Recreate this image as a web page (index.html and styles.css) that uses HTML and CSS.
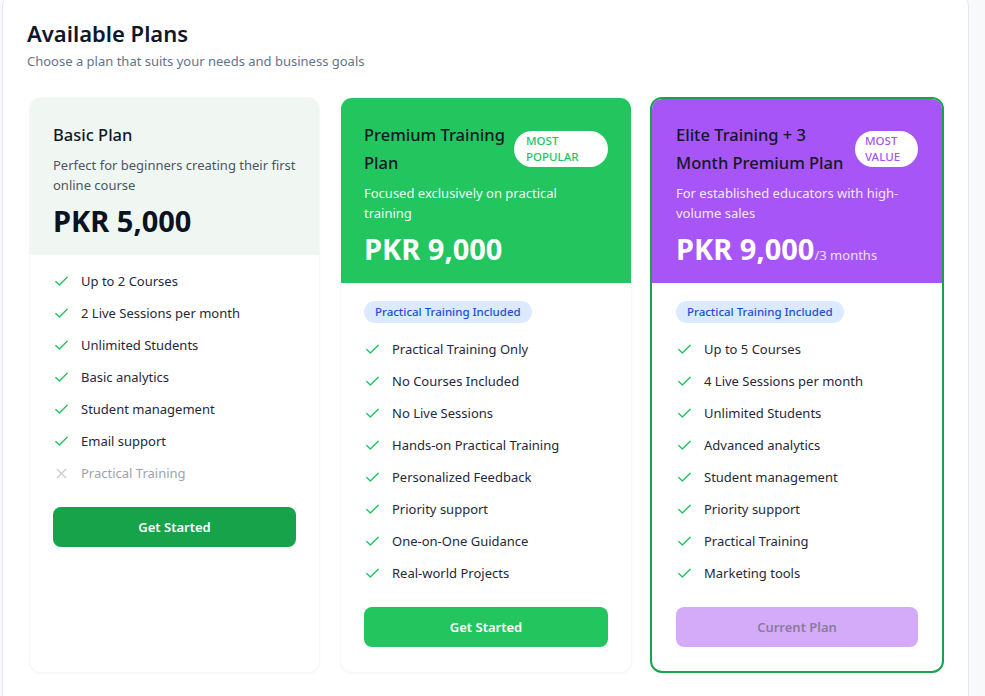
FILE: index.html
```html
<!DOCTYPE html>
<html lang="en">
<head>
<meta charset="utf-8">
<title>Available Plans</title>
<link rel="stylesheet" href="styles.css">
</head>
<body>
<section class="panel">
  <header class="panel-head">
    <h1 class="panel-title">Available Plans</h1>
    <p class="panel-sub">Choose a plan that suits your needs and business goals</p>
  </header>
  <div class="plans">
    <article class="card">
      <div class="card-head head-basic">
        <div class="title-row">
          <h2 class="plan-name">Basic Plan</h2>
        </div>
        <p class="plan-desc">Perfect for beginners creating their first online course</p>
        <div class="price">PKR 5,000</div>
      </div>
      <div class="card-body">
        <ul class="features">
          <li class="feat"><svg class="ico ok" viewBox="0 0 24 24"><path d="M20 6 9 17l-5-5"/></svg>Up to 2 Courses</li>
          <li class="feat"><svg class="ico ok" viewBox="0 0 24 24"><path d="M20 6 9 17l-5-5"/></svg>2 Live Sessions per month</li>
          <li class="feat"><svg class="ico ok" viewBox="0 0 24 24"><path d="M20 6 9 17l-5-5"/></svg>Unlimited Students</li>
          <li class="feat"><svg class="ico ok" viewBox="0 0 24 24"><path d="M20 6 9 17l-5-5"/></svg>Basic analytics</li>
          <li class="feat"><svg class="ico ok" viewBox="0 0 24 24"><path d="M20 6 9 17l-5-5"/></svg>Student management</li>
          <li class="feat"><svg class="ico ok" viewBox="0 0 24 24"><path d="M20 6 9 17l-5-5"/></svg>Email support</li>
          <li class="feat off"><svg class="ico no" viewBox="0 0 24 24"><path d="M18 6 6 18M6 6l12 12"/></svg>Practical Training</li>
        </ul>
        <button class="btn btn-dark">Get Started</button>
      </div>
    </article>

    <article class="card">
      <div class="card-head head-green">
        <div class="title-row">
          <h2 class="plan-name">Premium Training Plan</h2>
          <span class="tag tag-green">MOST POPULAR</span>
        </div>
        <p class="plan-desc desc-green">Focused exclusively on practical training</p>
        <div class="price price-light">PKR 9,000</div>
      </div>
      <div class="card-body">
        <span class="pill">Practical Training Included</span>
        <ul class="features">
          <li class="feat"><svg class="ico ok" viewBox="0 0 24 24"><path d="M20 6 9 17l-5-5"/></svg>Practical Training Only</li>
          <li class="feat"><svg class="ico ok" viewBox="0 0 24 24"><path d="M20 6 9 17l-5-5"/></svg>No Courses Included</li>
          <li class="feat"><svg class="ico ok" viewBox="0 0 24 24"><path d="M20 6 9 17l-5-5"/></svg>No Live Sessions</li>
          <li class="feat"><svg class="ico ok" viewBox="0 0 24 24"><path d="M20 6 9 17l-5-5"/></svg>Hands-on Practical Training</li>
          <li class="feat"><svg class="ico ok" viewBox="0 0 24 24"><path d="M20 6 9 17l-5-5"/></svg>Personalized Feedback</li>
          <li class="feat"><svg class="ico ok" viewBox="0 0 24 24"><path d="M20 6 9 17l-5-5"/></svg>Priority support</li>
          <li class="feat"><svg class="ico ok" viewBox="0 0 24 24"><path d="M20 6 9 17l-5-5"/></svg>One-on-One Guidance</li>
          <li class="feat"><svg class="ico ok" viewBox="0 0 24 24"><path d="M20 6 9 17l-5-5"/></svg>Real-world Projects</li>
        </ul>
        <button class="btn btn-green">Get Started</button>
      </div>
    </article>

    <article class="card card-current">
      <div class="card-head head-purple">
        <div class="title-row">
          <h2 class="plan-name">Elite Training + 3 Month Premium Plan</h2>
          <span class="tag tag-purple">MOST VALUE</span>
        </div>
        <p class="plan-desc desc-purple">For established educators with high-volume sales</p>
        <div class="price price-light">PKR 9,000<span class="per">/3 months</span></div>
      </div>
      <div class="card-body">
        <span class="pill">Practical Training Included</span>
        <ul class="features">
          <li class="feat"><svg class="ico ok" viewBox="0 0 24 24"><path d="M20 6 9 17l-5-5"/></svg>Up to 5 Courses</li>
          <li class="feat"><svg class="ico ok" viewBox="0 0 24 24"><path d="M20 6 9 17l-5-5"/></svg>4 Live Sessions per month</li>
          <li class="feat"><svg class="ico ok" viewBox="0 0 24 24"><path d="M20 6 9 17l-5-5"/></svg>Unlimited Students</li>
          <li class="feat"><svg class="ico ok" viewBox="0 0 24 24"><path d="M20 6 9 17l-5-5"/></svg>Advanced analytics</li>
          <li class="feat"><svg class="ico ok" viewBox="0 0 24 24"><path d="M20 6 9 17l-5-5"/></svg>Student management</li>
          <li class="feat"><svg class="ico ok" viewBox="0 0 24 24"><path d="M20 6 9 17l-5-5"/></svg>Priority support</li>
          <li class="feat"><svg class="ico ok" viewBox="0 0 24 24"><path d="M20 6 9 17l-5-5"/></svg>Practical Training</li>
          <li class="feat"><svg class="ico ok" viewBox="0 0 24 24"><path d="M20 6 9 17l-5-5"/></svg>Marketing tools</li>
        </ul>
        <button class="btn btn-current" disabled>Current Plan</button>
      </div>
    </article>
  </div>
</section>
</body>
</html>
```

FILE: styles.css
```css
* { box-sizing: border-box; }

html, body {
  margin: 0;
  padding: 0;
  background: #f8f9fb;
  font-family: "Noto Sans", "Open Sans", sans-serif;
  color: #111827;
  overflow: hidden;
}

.panel {
  width: 967px;
  margin: -6px 0 0 2px;
  background: #ffffff;
  border: 1px solid #e5e7eb;
  border-radius: 12px;
  padding: 22px 24px 40px;
}

.panel-title {
  margin: 0;
  font-size: 22px;
  line-height: 32px;
  font-weight: 600;
  color: #0f172a;
}

.panel-sub {
  margin: 2px 0 0;
  font-size: 13px;
  line-height: 20px;
  color: #64748b;
}

.plans {
  margin-top: 26px;
  padding-left: 2px;
  display: grid;
  grid-template-columns: 291px 292px 292px;
  column-gap: 20px;
}
.plans .card-current { margin-left: -2px; }

.card {
  display: flex;
  flex-direction: column;
  background: #ffffff;
  border: 1px solid #f6f7f8;
  border-radius: 12px;
  overflow: hidden;
  box-shadow: 0 1px 2px rgba(15, 23, 42, 0.035);
}

.card-current {
  border: 2px solid #16a34a;
  box-shadow: none;
}

.card-head {
  padding: 23px 23px 16px;
}
.card-current .card-head { padding: 22px 24px 16px; }

.head-basic { background: #f0f7f3; }
.head-green { background: #22c55e; }
.head-purple { background: #a855f7; }

.title-row {
  display: flex;
  align-items: center;
  gap: 6px;
}

.plan-name {
  margin: 0;
  flex: 1 1 auto;
  font-size: 16.5px;
  line-height: 28px;
  font-weight: 500;
  color: #111827;
}

.tag {
  flex: none;
  background: #ffffff;
  border-radius: 999px;
  padding: 2px 12px;
  font-size: 11.5px;
  line-height: 16px;
  font-weight: 500;
}
.tag-green { color: #22c55e; width: 94px; }
.tag-purple { color: #a855f7; width: 63px; padding: 2px 10px; }

.plan-desc {
  margin: 6px 0 0;
  font-size: 13px;
  line-height: 20px;
  color: #4b5563;
}
.desc-green { color: #ecfdf3; }
.desc-purple { color: #f3e8ff; }

.price {
  margin-top: 8px;
  font-size: 29px;
  line-height: 36px;
  height: 36px;
  font-weight: 700;
  color: #0b1220;
}
.price-light { color: #ffffff; }

.per {
  font-size: 13px;
  line-height: 1;
  font-weight: 400;
  color: #ede0fd;
}

.card-body {
  flex: 1 1 auto;
  padding: 16px 23px 24px;
}
.card-current .card-body { padding: 16px 24px 24px; }

.pill {
  display: inline-block;
  margin: 2px 0 16px;
  padding: 0 11px;
  height: 22px;
  line-height: 22px;
  border-radius: 999px;
  background: #dbeafe;
  color: #1d4ed8;
  font-size: 11.5px;
  font-weight: 500;
}

.features {
  list-style: none;
  margin: 0;
  padding: 0;
  display: flex;
  flex-direction: column;
  gap: 12px;
}

.feat {
  display: flex;
  align-items: center;
  font-size: 13px;
  line-height: 20px;
  color: #1e293b;
}

.feat.off { color: #9ca3af; }

.ico {
  width: 17px;
  height: 17px;
  margin-right: 11px;
  flex: none;
  fill: none;
  stroke-width: 2;
  stroke-linecap: round;
  stroke-linejoin: round;
}
.ico.ok { stroke: #22c55e; }
.ico.no { stroke: #c3c7ce; stroke-width: 1.6; }

.btn {
  display: block;
  width: 100%;
  height: 40px;
  margin-top: 24px;
  border: 0;
  border-radius: 8px;
  font-family: inherit;
  font-size: 13px;
  font-weight: 600;
  color: #ffffff;
}
.btn-dark { background: #16a34a; }
.btn-green { background: #22c55e; }
.btn-current {
  background: #d4abf9;
  color: #8b7b9c;
}
```
